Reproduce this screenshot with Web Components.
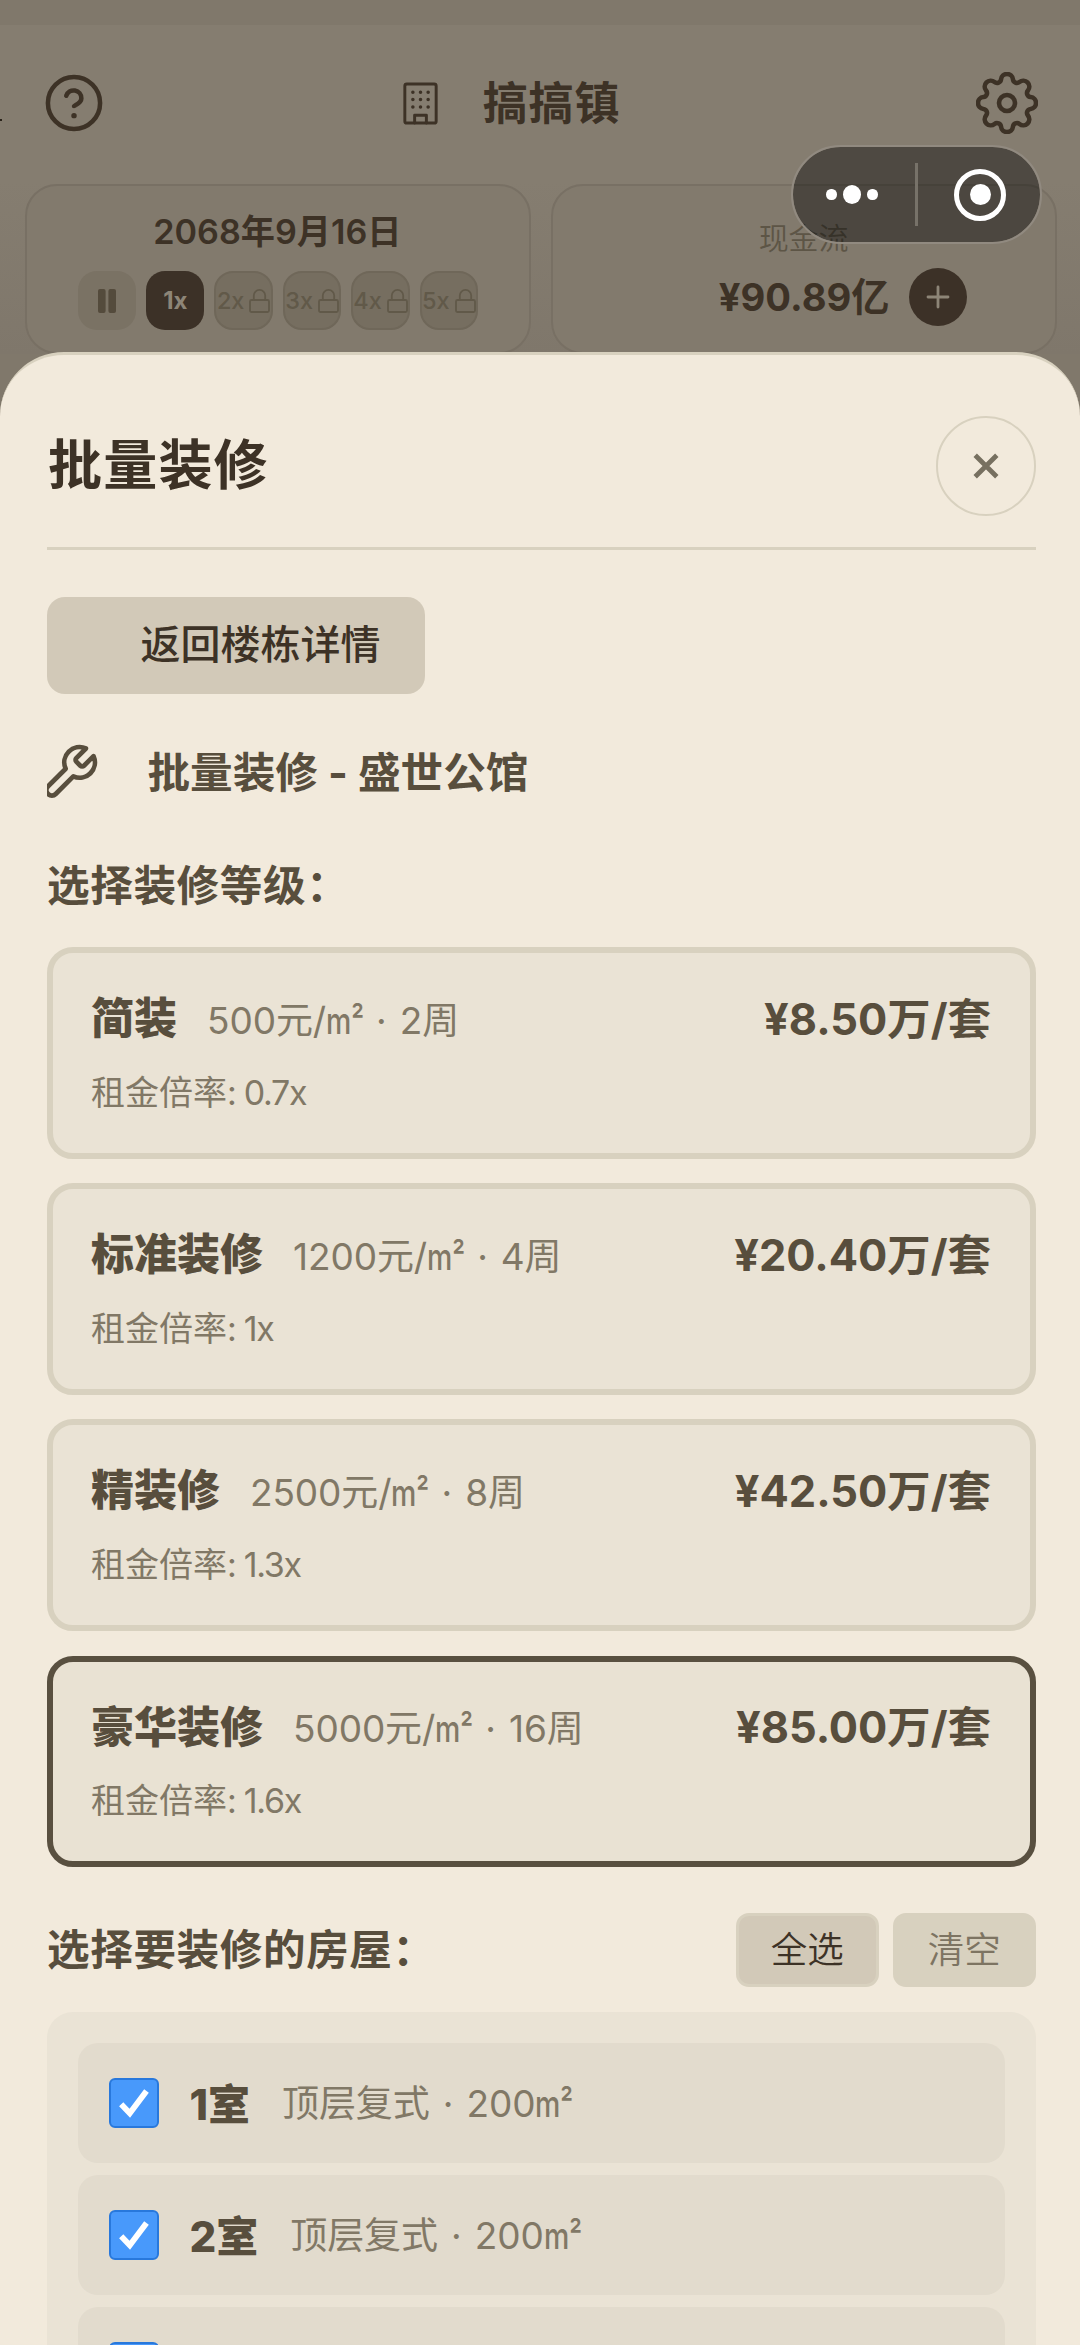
<!DOCTYPE html>
<html lang="zh-CN">
<head>
<meta charset="utf-8">
<title>批量装修</title>
<style>
html,body{margin:0;padding:0}
body{width:1080px;height:2345px;overflow:hidden;background:#857d70;font-family:"Inter","Noto Sans CJK SC",sans-serif;color:#3d3226}
</style>
</head>
<body>
<town-app></town-app>
<script>
const define=(name,html,setup)=>customElements.define(name,class extends HTMLElement{
  connectedCallback(){
    if(this.shadowRoot)return;
    const root=this.attachShadow({mode:'open'});
    const t=document.createElement('template');
    t.innerHTML=html;
    root.append(t.content.cloneNode(true));
    if(setup)setup(this,root);
  }
});

/* Eight-lobed cog outline: convex and concave arcs that meet at tangent points. */
function cogPath(){
  const R=6,r=4,dl=23,dv=26,n=8,step=Math.PI/4;
  const at=(d,a)=>[31+d*Math.sin(a),31-d*Math.cos(a)];
  const meet=(c,v)=>c.map((k,i)=>(k+(v[i]-k)*R/(R+r)).toFixed(2));
  let d='';
  for(let i=0;i<n;i++){
    const c=at(dl,i*step),a=meet(c,at(dv,(i-.5)*step)),b=meet(c,at(dv,(i+.5)*step));
    d+=(i?`A${r} ${r} 0 0 0 ${a}`:`M${a}`)+`A${R} ${R} 0 0 1 ${b}`;
  }
  return d+`A${r} ${r} 0 0 0 ${meet(at(dl,0),at(dv,-.5*step))}Z`;
}

const ICONS={
  help:`<svg width="62" height="62" viewBox="0 0 24 24" stroke-width="1.75"><circle cx="12" cy="12" r="10.1"/><path d="M9 9.2a3 3 0 0 1 5.85 1c0 2-2.85 2.7-2.85 3"/><path d="M12 16.9h.01" stroke-width="2.1"/></svg>`,
  building:`<svg width="47" height="47" viewBox="0 0 24 24" stroke-width="1.5"><rect x="4" y="2" width="16" height="20" rx="1"/><path d="M9 22v-4h6v4"/><path stroke-width="1.8" d="M8.1 6.2h.01M12 6.2h.01M15.9 6.2h.01M8.1 10h.01M12 10h.01M15.9 10h.01M8.1 13.8h.01M12 13.8h.01M15.9 13.8h.01"/></svg>`,
  cog:`<svg width="62" height="62" viewBox="0 0 62 62" stroke-width="4.6"><path d="${cogPath()}"/><circle cx="31" cy="31" r="8"/></svg>`,
  pause:`<svg width="18" height="24" viewBox="0 0 18 24" style="fill:currentColor;stroke:none"><rect width="7.6" height="24" rx="2"/><rect x="10.4" width="7.6" height="24" rx="2"/></svg>`,
  lock:`<svg width="21" height="24" viewBox="0 0 21 24" stroke-width="1.8"><rect x="1" y="11" width="19" height="12" rx="1.5"/><path d="M4.8 11V6.6a5.7 5.7 0 0 1 11.4 0V11"/></svg>`,
  plus:`<svg width="24" height="24" viewBox="0 0 24 24" stroke-width="2.8"><path d="M12 2v20M2 12h20"/></svg>`,
  close:`<svg width="26" height="26" viewBox="0 0 26 26" stroke-width="4.8" style="stroke-linecap:butt"><path d="M2.2 2.2l21.6 21.6M23.8 2.2L2.2 23.8"/></svg>`,
  wrench:`<svg width="54" height="62" viewBox="3.2 0 21.2 24.3" stroke-width="1.85"><path d="M14.7 6.3a1 1 0 0 0 0 1.4l1.6 1.6a1 1 0 0 0 1.4 0l3.77-3.77a6 6 0 0 1-7.94 7.94l-6.91 6.91a2.12 2.12 0 0 1-3-3l6.91-6.91a6 6 0 0 1 7.94-7.94l-3.76 3.76z"/></svg>`
};
define('ui-icon',`<style>:host{display:block;line-height:0;flex:none}svg{display:block;fill:none;stroke:currentColor;stroke-linecap:round;stroke-linejoin:round}</style>`,
  (el,root)=>root.append(document.createRange().createContextualFragment(ICONS[el.getAttribute('name')])));

define('sq-meter',`<style>:host{display:inline-block;width:37px;white-space:nowrap;font-weight:480}span{display:inline-block;transform:scaleX(.77);transform-origin:0 50%}</style><span>m²</span>`);

define('top-bar',`<style>
:host{display:flex;align-items:center;justify-content:space-between;height:156px;padding:0 42px 0 43px;margin-top:25px;box-sizing:border-box;background:#857d70}
.t{display:flex;align-items:center;gap:39px;margin-right:64px}
.t span{font-size:45px;font-weight:700;letter-spacing:.8px;line-height:60px;padding-top:2px}
.k{position:absolute;left:0;top:119px;width:2px;height:2px;background:#2a231a}
</style><i class="k"></i><ui-icon name="help"></ui-icon><div class="t"><ui-icon name="building"></ui-icon><span><slot></slot></span></div><ui-icon name="cog"></ui-icon>`);

define('stat-card',`<style>
:host{display:flex;flex-direction:column;align-items:center;box-sizing:border-box;flex:1;height:170px;border:2px solid #787064;border-radius:32px;background:#827a6d}
</style><slot></slot>`);

define('speed-chip',`<style>
:host{display:flex;align-items:center;justify-content:center;gap:5px;box-sizing:border-box;width:58.4px;height:59px;border-radius:19px;background:#7a7264;color:#544b3c;font-size:24px;font-weight:700;line-height:30px}
:host([active]){background:#3c3127;color:#8d8577}
:host([locked]){background:#766e60;border:2px solid #6f6759;color:#615949;font-weight:500;font-size:23.5px}
</style><slot></slot>`);

define('time-card',`<style>
:host{display:flex;flex:1}
.d{font-size:34.2px;font-weight:600;line-height:40px;margin-top:26px;margin-left:-1px}
.r{display:flex;gap:10px;margin-top:19px}
</style><stat-card><div class="d">2068年9月16日</div><div class="r">
<speed-chip><ui-icon name="pause"></ui-icon></speed-chip><speed-chip active>1x</speed-chip>
<speed-chip locked><span>2x</span><ui-icon name="lock"></ui-icon></speed-chip><speed-chip locked><span>3x</span><ui-icon name="lock"></ui-icon></speed-chip><speed-chip locked><span>4x</span><ui-icon name="lock"></ui-icon></speed-chip><speed-chip locked><span>5x</span><ui-icon name="lock"></ui-icon></speed-chip></div></stat-card>`);

define('cash-card',`<style>
:host{display:flex;flex:1}
.l{font-size:30px;font-weight:350;line-height:36px;margin-top:34px;color:#5d5546}
.r{display:flex;align-items:center;gap:20px;margin-top:12px;margin-left:79px}
.v{font-size:38.2px;font-weight:700;line-height:48px}
.p{display:grid;place-items:center;width:58px;height:58px;border-radius:50%;background:#3c3127;color:#8d8577}
</style><stat-card><div class="l">现金流</div><div class="r"><div class="v">¥90.89亿</div><div class="p"><ui-icon name="plus"></ui-icon></div></div></stat-card>`);

define('mini-capsule',`<style>
:host{position:absolute;left:790.5px;top:145px;width:251px;height:99px;box-sizing:border-box;border:2.5px solid #918a80;border-radius:50px;background:rgba(0,0,0,.41);background-clip:padding-box;display:flex;align-items:center}
.h{flex:1;display:flex;align-items:center;justify-content:center;gap:6px;padding-right:3px}
.h+.s+.h{padding:0 0 0 3px}
i{background:#fff;border-radius:50%;width:10.5px;height:11.5px}i.b{width:18.5px;height:19px}
.s{width:3px;height:63px;background:#777269}
.o{width:52px;height:52px;box-sizing:border-box;border:5.5px solid #fff;border-radius:50%;display:grid;place-items:center}
.o i{width:21px;height:21px}
</style><div class="h"><i></i><i class="b"></i><i></i></div><div class="s"></div><div class="h"><div class="o"><i></i></div></div>`);

define('tier-option',`<style>
:host{display:block;box-sizing:border-box;height:211.5px;border:6px solid #d8d1bf;border-radius:26px;background:#eae3d5;padding:35px 38.5px 0 38px}
:host([selected]){border-color:#595040;background:#e9e2d3}
.a{display:flex;align-items:center;height:54px}
.n{font-size:43px;font-weight:800;color:#584e3d}
.m{font-size:37px;font-weight:400;color:#817866;margin-left:30px;flex:1;padding-top:5px;word-spacing:2.8px;letter-spacing:-.1px}
.p{font-size:43.4px;font-weight:700;color:#584e3d;padding-top:1px}
.x{font-size:34px;font-weight:400;color:#817866;line-height:44px;margin-top:28.5px}
.x span{letter-spacing:-1.3px}
</style><div class="a"><span class="n"></span><span class="m"><span class="c"></span><sq-meter></sq-meter><span class="w"></span></span><span class="p"></span></div><div class="x">租金倍率<span></span></div>`,
(el,r)=>{
  const set=(s,v)=>r.querySelector(s).textContent=v,g=k=>el.getAttribute(k);
  set('.n',g('name'));set('.c',g('cost')+'元/');set('.w',' · '+g('weeks')+'周');set('.p',g('price'));set('.x span',': '+g('rent'));
});

define('small-button',`<style>
:host{display:grid;place-items:center;box-sizing:border-box;width:142.5px;height:74px;border:3px solid #d8d1bf;border-radius:13px;background:#d8d1bf;color:#7d7462;font-size:36.5px;font-weight:350}
:host([primary]){background:#d2c9b8;color:#3d3226}
</style><span><slot></slot></span>`);

define('room-item',`<style>
:host{display:flex;align-items:center;box-sizing:border-box;height:119.7px;flex:none;border-radius:20px;background:#e2dbcd;padding:0 31px}
.c{width:50px;height:50px;flex:none;box-sizing:border-box;border:2px solid #2878dc;border-radius:6px;background:#4899fb}
svg{display:block;width:46px;height:46px}
.n,.m{padding-bottom:3px}
.n{font-size:42px;font-weight:800;color:#584e3d;margin-left:30.5px}
.m{font-size:37px;font-weight:400;color:#817866;margin-left:32px;word-spacing:2.8px;letter-spacing:-.1px}
:host([clipped]) .n,:host([clipped]) .m{visibility:hidden}
</style><div class="c"><svg viewBox="0 0 46 46"><path d="M10.2 24.2l8.6 9L35.5 11" fill="none" stroke="#fff" stroke-width="5.8"/></svg></div><span class="n"><slot></slot></span><span class="m">顶层复式 · 200<sq-meter></sq-meter></span>`);

define('bottom-sheet',`<style>
:host{display:flex;flex-direction:column;flex:none;height:1993px;margin-top:-2px;box-sizing:border-box;overflow:hidden;border-top:3px solid #d8d1bf;border-radius:64px 64px 0 0;background:#f2eadc;padding:61px 44.5px 0 47px;position:relative;z-index:1}
.hd{display:flex;align-items:center;justify-content:space-between;height:100px;padding-bottom:31px;border-bottom:3px solid #d8d1bf;flex:none}
.hd b{font-size:54px;line-height:70px;letter-spacing:1.2px;font-weight:700;margin-left:1px}
.cl{display:grid;place-items:center;box-sizing:border-box;width:99.5px;height:99.5px;border:2.5px solid #d8d1bf;border-radius:50%;color:#777060}
::slotted(*){flex-shrink:0}
</style><div class="hd"><b>批量装修</b><div class="cl"><ui-icon name="close"></ui-icon></div></div><slot></slot>`);

define('town-app',`<style>
:host{display:flex;flex-direction:column;height:2345px;position:relative;background:#80786b}
.cards{display:flex;gap:20px;padding:3px 23.5px 0 25px;background:linear-gradient(#857d70,#7f776b);height:170px}
.back{align-self:flex-start;box-sizing:border-box;width:377.5px;height:96.5px;border-radius:18px;background:#d2c9b8;margin-top:47px;padding-left:93.5px;font-size:40px;font-weight:450;line-height:95px}
.h{display:flex;align-items:center;font-size:42.6px;font-weight:700;color:#584e3d;line-height:60px}
.h1{margin-top:48px;gap:46.5px;height:62px}
.h2{margin-top:52px;letter-spacing:.6px}
.tiers{display:flex;flex-direction:column;gap:24.7px;margin-top:31.5px}
.h3{margin-top:46px;height:74px;justify-content:space-between;letter-spacing:.6px}
.bt{display:flex;gap:14.5px;letter-spacing:0}
.list{margin-top:25px;height:600px;box-sizing:border-box;border-radius:26px;background:#eae3d5;padding:31px;display:flex;flex-direction:column;gap:12.3px}
.bg{display:flex;flex-direction:column;height:354px;flex:none}
</style><div class="bg"><top-bar>搞搞镇</top-bar><div class="cards"><time-card></time-card><cash-card></cash-card></div></div>
<mini-capsule></mini-capsule>
<bottom-sheet>
<div class="back">返回楼栋详情</div>
<div class="h h1"><ui-icon name="wrench"></ui-icon><span>批量装修 - 盛世公馆</span></div>
<div class="h h2"><span>选择装修等级：</span></div>
<div class="tiers">
<tier-option name="简装" cost="500" weeks="2" price="¥8.50万/套" rent="0.7x"></tier-option>
<tier-option name="标准装修" cost="1200" weeks="4" price="¥20.40万/套" rent="1x"></tier-option>
<tier-option name="精装修" cost="2500" weeks="8" price="¥42.50万/套" rent="1.3x"></tier-option>
<tier-option selected name="豪华装修" cost="5000" weeks="16" price="¥85.00万/套" rent="1.6x"></tier-option>
</div>
<div class="h h3"><span>选择要装修的房屋：</span><div class="bt"><small-button primary>全选</small-button><small-button>清空</small-button></div></div>
<div class="list"><room-item>1室</room-item><room-item>2室</room-item><room-item clipped></room-item></div>
</bottom-sheet>`);
</script>
</body>
</html>
